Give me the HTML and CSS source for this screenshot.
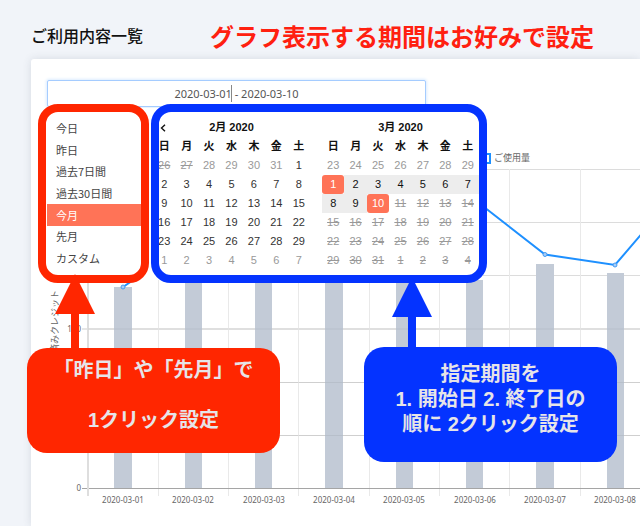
FILE: index.html
```html
<!DOCTYPE html>
<html lang="ja">
<head>
<meta charset="utf-8">
<meta name="viewport" content="width=device-width, initial-scale=1">
<title>ご利用内容一覧</title>
<link rel="stylesheet" href="styles.css">
</head>
<body>
<div class="page">
  <header class="page-header">
    <h1>ご利用内容一覧</h1>
    <p class="headline">グラフ表示する期間はお好みで設定</p>
  </header>

  <main class="card">
    <div class="range-field">
      <input class="range-input" type="text" aria-label="期間" value="2020-03-01 - 2020-03-10">
      <span class="caret"></span>
      <div class="picker">
        <div class="presets">
          <button type="button">今日</button>
          <button type="button">昨日</button>
          <button type="button">過去7日間</button>
          <button type="button">過去30日間</button>
          <button type="button" class="active">今月</button>
          <button type="button">先月</button>
          <button type="button">カスタム</button>
        </div>
        <div class="calendars">
          <table class="calendar" id="february"></table>
          <table class="calendar" id="march"></table>
          <button type="button" class="prev" aria-label="前の月"><svg width="6" height="8" viewBox="0 0 6 8"><path d="M5 .7 1.5 4 5 7.3"/></svg></button>
        </div>
      </div>
    </div>

    <div class="chart">
      <svg width="680" height="380" viewBox="47 140 680 380" role="img" aria-label="ご使用量">
        <g class="grid">
          <path d="M82 169.5H727M82 222.5H727M82 275.5H727M82 382.5H727M82 435.5H727"/>
          <path class="grid-mid" d="M82 329H727"/>
          <path class="grid-vertical" d="M158.5 169V496M228.5 169V496M298.5 169V496M369.5 169V496M439.5 169V496M509.5 169V496M580.5 169V496"/>
          <path class="axis" d="M82 488.5H727"/>
          <path class="axis-left" d="M88 169V496"/>
        </g>
        <g class="bars">
          <rect x="114" y="287" width="18" height="201"/>
          <rect x="185" y="240" width="17" height="248"/>
          <rect x="255" y="240" width="17" height="248"/>
          <rect x="325" y="240" width="18" height="248"/>
          <rect x="396" y="240" width="17" height="248"/>
          <rect x="466" y="220" width="17" height="268"/>
          <rect x="536" y="264" width="18" height="224"/>
          <rect x="607" y="273" width="17" height="215"/>
        </g>
        <path class="grid-over" d="M88 329H727M88 382.5H727M88 435.5H727"/>
        <path class="line" d="M123 287 193 240 264 230 334 220 404 210 475 200 545 254.500 615 265 685 183"/>
        <g class="points">
          <circle cx="123" cy="287" r="2"/><circle cx="545" cy="254.500" r="2"/><circle cx="615" cy="265" r="2"/>
        </g>
        <rect class="legend-box" x="480" y="154" width="10" height="9"/>
        <text class="label-ja" x="494" y="161">ご使用量</text>
        <text class="label-ja" text-anchor="end" transform="translate(58 290) rotate(-90)">使用済みクレジット</text>
        <g class="labels" text-anchor="end">
          <text x="81" y="332">100</text><text x="81" y="491">0</text>
        </g>
        <g class="labels" text-anchor="middle">
          <text x="123" y="503">2020-03-01</text>
          <text x="193" y="503">2020-03-02</text>
          <text x="264" y="503">2020-03-03</text>
          <text x="334" y="503">2020-03-04</text>
          <text x="404" y="503">2020-03-05</text>
          <text x="475" y="503">2020-03-06</text>
          <text x="545" y="503">2020-03-07</text>
          <text x="615" y="503">2020-03-08</text>
        </g>
      </svg>
    </div>
  </main>

  <div class="frame frame-red"></div>
  <div class="frame frame-blue"></div>
  <svg class="arrow arrow-red" width="40" height="80" viewBox="0 0 40 80"><path d="M20 0 40 40H24V80H16V40H0Z"/></svg>
  <svg class="arrow arrow-blue" width="40" height="80" viewBox="0 0 40 80"><path d="M20 0 40 40H24V80H16V40H0Z"/></svg>
  <p class="callout callout-red">「昨日」や「先月」で<br><br>1クリック設定</p>
  <p class="callout callout-blue">指定期間を<br>1. 開始日 2. 終了日の<br>順に 2クリック設定</p>
</div>
<script src="calendar.js"></script>
</body>
</html>
```
FILE: styles.css
```css
* { box-sizing: border-box; }

body {
  margin: 0;
  background: #f1f4f9;
  font-family: "Liberation Sans", "Noto Sans CJK JP", sans-serif;
  color: #333;
}

button {
  margin: 0;
  padding: 0;
  border: 0;
  background: none;
  font: inherit;
  color: inherit;
  cursor: pointer;
}

.page {
  position: relative;
  display: flex;
  flex-direction: column;
  min-height: 100vh;
  padding-left: 31px;
  overflow: hidden;
}

.page-header {
  display: flex;
  align-items: center;
  gap: 67px;
  height: 59px;
  padding-top: 11px;
  white-space: nowrap;
}

h1 {
  margin: 0;
  font-size: 16px;
  font-weight: 500;
  color: #111;
}

.headline {
  margin: 0;
  font-size: 24px;
  font-weight: 700;
  color: #ff2010;
}

.card {
  flex: 1;
  padding: 21px 0 0 16px;
  background: #fff;
  border-radius: 3px 0 0 0;
  box-shadow: 0 0 8px rgba(60, 70, 90, 0.14);
}

.range-field {
  position: relative;
  width: 64%;
  max-width: 379px;
}

.range-input {
  display: block;
  width: 100%;
  height: 27px;
  padding: 0;
  border: 1px solid #a5ccff;
  border-radius: 2px;
  outline: 0;
  box-shadow: 0 0 3px 1px #dcecff;
  font: 11px "Noto Sans", sans-serif;
  color: #555;
  text-align: center;
}

.caret {
  position: absolute;
  top: 5px;
  left: 184px;
  width: 1px;
  height: 17px;
  background: #888;
}

.picker {
  position: absolute;
  top: 28px;
  left: 0;
  display: flex;
  width: 436px;
  height: 172px;
  padding-top: 9px;
  background: #fff;
}

.presets {
  display: grid;
  grid-auto-rows: 1fr;
  width: 96px;
  height: 152px;
  margin-right: 10px;
}

.presets button {
  padding-left: 9px;
  font-family: "Noto Sans CJK JP", sans-serif;
  font-size: 11px;
  line-height: 16px;
  color: #444;
  text-align: left;
}

.presets .active {
  background: #ff7357;
  color: #fff;
}

.calendars {
  position: relative;
  display: flex;
  gap: 12px;
  align-items: flex-start;
  padding-top: 1px;
}

.prev {
  position: absolute;
  top: 7px;
  left: 7px;
  display: flex;
}

.prev path {
  fill: none;
  stroke: #111;
  stroke-width: 1.4;
}

.calendar {
  width: 157px;
  table-layout: fixed;
  border-collapse: collapse;
  font-size: 11px;
  line-height: 19px;
  text-align: center;
}

.calendar th,
.calendar td {
  height: 19px;
  padding: 0;
}

.calendar th { color: #111; }

.calendar td button {
  display: block;
  width: 100%;
  height: 19px;
}

.calendar .outside { color: #999; }

.calendar .disabled {
  color: #999;
  text-decoration: line-through;
}

.calendar .in-range {
  background: #ededed;
  color: #111;
}

.calendar .edge {
  border-radius: 3px;
  background: #ff7357;
  color: #fff;
}

.chart {
  margin-top: 33px;
  overflow: hidden;
}

.chart svg { display: block; }

.grid path { fill: none; stroke: #dcdcdc; }
.grid .grid-mid { stroke: #e6e6e6; stroke-width: 2; }
.grid .grid-vertical { stroke: #e9e9e9; }
.grid .axis { stroke: #a5a5a5; }
.grid .axis-left { stroke: #dedede; stroke-width: 2; }
.grid-over { stroke: rgba(0, 0, 0, 0.06); }
.bars { fill: #c3cbd7; }
.line { fill: none; stroke: #1e90ff; stroke-width: 2; }
.points { fill: #a9cdf5; stroke: #459cf4; }
.legend-box { fill: #fff; stroke: #1e90ff; stroke-width: 2; }
.labels { font-family: "Noto Sans", sans-serif; font-size: 8px; fill: #666; }
.label-ja { font-size: 9px; fill: #666; }

.frame {
  position: absolute;
  top: 104px;
  height: 179px;
  border: 8px solid;
  border-radius: 20px;
  pointer-events: none;
}

.frame-red {
  left: 38px;
  width: 111px;
  border-color: #ff2600;
}

.frame-blue {
  left: 151px;
  width: 336px;
  border-color: #0433ff;
}

.arrow { position: absolute; }

.arrow-red {
  top: 274px;
  left: 55px;
  fill: #ff2600;
}

.arrow-blue {
  top: 277px;
  left: 392px;
  fill: #0433ff;
}

.callout {
  position: absolute;
  width: 253px;
  margin: 0;
  border-radius: 20px;
  font-size: 20px;
  font-weight: 700;
  line-height: 25px;
  text-align: center;
  color: #e6e4e8;
}

.callout-red {
  top: 348px;
  left: 27px;
  height: 105px;
  padding-top: 10px;
  background: #ff2600;
}

.callout-blue {
  top: 347px;
  left: 364px;
  height: 115px;
  padding-top: 15px;
  background: #0433ff;
}
```
FILE: calendar.js
```js
const WEEKDAYS = ['日', '月', '火', '水', '木', '金', '土'];

// Fills a table with six weeks, starting from the given date.
function renderCalendar(id, title, start, month, stateOf) {
  let html = `<thead><tr><th colspan="7">${title}</th></tr><tr>`;
  html += WEEKDAYS.map((name) => `<th>${name}</th>`).join('') + '</tr></thead><tbody>';
  for (let week = 0; week < 6; week++) {
    html += '<tr>';
    for (let day = 0; day < 7; day++) {
      const offset = week * 7 + day;
      const date = new Date(2020, start[0] - 1, start[1] + offset);
      const classes = stateOf(offset) || (date.getMonth() + 1 === month ? '' : 'outside');
      html += `<td><button type="button" class="${classes}">${date.getDate()}</button></td>`;
    }
    html += '</tr>';
  }
  document.getElementById(id).innerHTML = html + '</tbody>';
}

renderCalendar('february', '2月 2020', [1, 26], 2, (n) => (n < 2 ? 'disabled' : ''));
renderCalendar('march', '3月 2020', [2, 23], 3, (n) => {
  if (n === 7 || n === 16) return 'edge';
  if (n > 7 && n < 16) return 'in-range';
  return n > 16 ? 'disabled' : '';
});
```
